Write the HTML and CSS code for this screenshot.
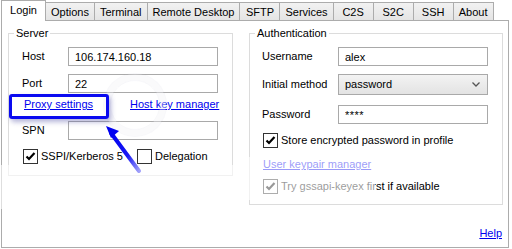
FILE: index.html
```html
<!DOCTYPE html>
<html lang="en">
<head>
    <meta charset="UTF-8">
    <title>Login settings</title>
    <link rel="stylesheet" href="styles.css">
</head>
<body>
    <div class="window">
        <div class="tabs">
            <div class="tab active">Login</div>
            <div class="tab">Options</div>
            <div class="tab">Terminal</div>
            <div class="tab">Remote Desktop</div>
            <div class="tab">SFTP</div>
            <div class="tab">Services</div>
            <div class="tab">C2S</div>
            <div class="tab">S2C</div>
            <div class="tab">SSH</div>
            <div class="tab">About</div>
        </div>

        <div class="panel">
            <div class="columns">
                <div class="group server">
                    <span class="group-title">Server</span>
                    <div class="row row-first">
                        <label class="field-label">Host</label>
                        <input class="field" type="text" value="106.174.160.18" readonly>
                    </div>
                    <div class="row row-port">
                        <label class="field-label">Port</label>
                        <input class="field" type="text" value="22" readonly>
                    </div>
                    <div class="row links">
                        <a href="#" class="link">Proxy settings</a>
                        <a href="#" class="link">Host key manager</a>
                    </div>
                    <div class="row row-spn">
                        <label class="field-label">SPN</label>
                        <input class="field" type="text" value="" readonly>
                    </div>
                    <div class="row row-check checks">
                        <span class="check checked">SSPI/Kerberos 5</span>
                        <span class="check delegation">Delegation</span>
                    </div>
                </div>

                <div class="group auth">
                    <span class="group-title">Authentication</span>
                    <div class="row row-first">
                        <label class="field-label">Username</label>
                        <input class="field" type="text" value="alex" readonly>
                    </div>
                    <div class="row row-method">
                        <label class="field-label">Initial method</label>
                        <div class="select">
                            <span>password</span>
                            <svg width="8" height="5" viewBox="0 0 8 5"><path d="M0.5 0.5 L4 4 L7.5 0.5" fill="none" stroke="#555" stroke-width="1.3"/></svg>
                        </div>
                    </div>
                    <div class="row row-password">
                        <label class="field-label">Password</label>
                        <input class="field secret" type="text" value="****" readonly>
                    </div>
                    <div class="row row-store">
                        <span class="check checked">Store encrypted password in profile</span>
                    </div>
                    <div class="row row-keypair">
                        <a href="#" class="link">User keypair manager</a>
                    </div>
                    <div class="row row-gss">
                        <span class="check checked">Try gssapi-keyex first if available</span>
                    </div>
                </div>
            </div>
            <div class="footer">
                <a href="#" class="link">Help</a>
            </div>
        </div>

        <!-- annotation layer -->
        <div class="watermark"></div>
        <div class="fade fade-left"></div>
        <div class="fade fade-right"></div>
        <div class="callout"></div>
        <svg class="arrow" width="60" height="70" viewBox="0 0 60 70">
            <defs>
                <linearGradient id="arrowFade" x1="0" y1="0" x2="1" y2="1">
                    <stop offset="0" stop-color="#0000f0"/>
                    <stop offset="0.6" stop-color="#1818f4"/>
                    <stop offset="1" stop-color="#a0a0fa"/>
                </linearGradient>
            </defs>
            <path d="M8 12 L36 50" stroke="url(#arrowFade)" stroke-width="4" stroke-linecap="round"/>
            <path d="M3 5 L16 10 L8 17 Z" fill="#0000f0"/>
        </svg>
    </div>
</body>
</html>
```

FILE: styles.css
```css
:root {
    --tab-border: #acacac;
    --group-border: #dcdcdc;
    --field-border: #a9a9a9;
    --link-color: #0000ee;
    --callout: #0a0af0;
}

* {
    margin: 0;
    padding: 0;
    box-sizing: border-box;
}

body {
    background: #fff;
    font-family: "Liberation Sans", Arial, sans-serif;
    font-size: 11px;
    line-height: 13px;
    color: #000;
}

.window {
    position: relative;
    width: 512px;
    height: 249px;
    overflow: hidden;
}

/* Tabs */
.tabs {
    display: flex;
    align-items: flex-end;
    height: 20px;
    padding-left: 1px;
}

.tab {
    height: 18px;
    min-width: 41px;
    padding: 1px 5px 0;
    margin-left: -1px;
    border: 1px solid var(--tab-border);
    border-bottom: none;
    background: linear-gradient(#f2f2f2, #e4e4e4);
    display: flex;
    align-items: center;
    justify-content: center;
    white-space: nowrap;
}

.tab.active {
    position: relative;
    z-index: 2;
    height: 21px;
    width: 45px;
    margin-left: 0;
    margin-bottom: -1px;
    background: #fff;
    padding-top: 0;
    padding-bottom: 2px;
}

/* Panel */
.panel {
    margin-left: 1px;
    width: 508px;
    height: 228px;
    border: 1px solid var(--tab-border);
    padding: 12px 5px 0 6px;
    display: flex;
    flex-direction: column;
}

.columns {
    display: flex;
    align-items: flex-start;
    gap: 16px;
}

.group {
    position: relative;
    border: 1px solid var(--group-border);
}

.group.server {
    width: 225px;
    height: 143px;
    padding-left: 13px;
}

.group.auth {
    width: 254px;
    height: 172px;
    padding-left: 12px;
}

.group-title {
    position: absolute;
    top: -7px;
    left: 5px;
    padding: 0 2px;
    background: #fff;
}

.row {
    display: flex;
    align-items: center;
    height: 19px;
}

.row-first { margin-top: 13px; }
.row-port { margin-top: 8px; }
.row-spn { margin-top: 7px; }
.row-check { margin-top: 7px; }

.server .field-label {
    width: 46px;
}

.auth .field-label {
    width: 76px;
}

.field {
    width: 150px;
    height: 19px;
    border: 1px solid var(--field-border);
    padding: 0 6px;
    font: inherit;
    color: #000;
    background: #fff;
    outline: none;
}

.field.secret {
    letter-spacing: 0.5px;
}

.links {
    margin-top: 2px;
    display: grid;
    grid-template-columns: 106px auto;
    padding-left: 2px;
}

.link {
    color: var(--link-color);
    text-decoration: underline;
}

.checks {
    padding-left: 1px;
}

.check {
    display: inline-flex;
    align-items: center;
    white-space: nowrap;
}

.check::before {
    content: "";
    width: 13px;
    height: 13px;
    margin-right: 3px;
    border: 1px solid #333;
    background: #fff no-repeat center;
}

.check.checked::before {
    background-image: url("data:image/svg+xml,%3Csvg xmlns='http://www.w3.org/2000/svg' width='11' height='11' viewBox='0 0 11 11'%3E%3Cpath d='M1.5 5.5 L4 8 L9.5 2' fill='none' stroke='%23000' stroke-width='2.2'/%3E%3C/svg%3E");
}

.check.delegation {
    margin-left: 14px;
}

.row-method {
    margin-top: 8px;
    height: 21px;
}

.select {
    width: 150px;
    height: 21px;
    border: 1px solid var(--field-border);
    background: linear-gradient(#f3f3f3, #e3e3e3);
    display: flex;
    align-items: center;
    justify-content: space-between;
    padding: 0 7px 0 6px;
}

.row-password { margin-top: 10px; }
.row-store { margin-top: 7px; padding-left: 1px; }
.row-keypair { margin-top: 5px; padding-left: 1px; }
.row-gss { margin-top: 3px; padding-left: 1px; }

.footer {
    margin-top: auto;
    display: flex;
    justify-content: flex-end;
    padding: 0 1px 7px 0;
}

/* Annotation overlays */
.fade {
    position: absolute;
    background: rgba(255, 255, 255, 0.6);
}

.fade-left {
    left: 0;
    top: 165px;
    width: 240px;
    height: 44px;
}

.fade-right {
    left: 240px;
    top: 157px;
    width: 135px;
    height: 43px;
}

.watermark {
    position: absolute;
    left: 110px;
    top: 80px;
    width: 50px;
    height: 50px;
    border-radius: 50%;
    border: 1px solid rgba(190, 190, 210, 0.1);
    box-shadow: 0 0 0 6px rgba(255, 255, 255, 0.3), 0 0 0 7px rgba(190, 190, 210, 0.1);
}

.callout {
    position: absolute;
    left: 9px;
    top: 94px;
    width: 100px;
    height: 25px;
    border: 3px solid var(--callout);
    border-radius: 3px;
    box-shadow: 2px 3px 5px rgba(90, 90, 170, 0.45);
}

.arrow {
    position: absolute;
    left: 103px;
    top: 121px;
}
```
